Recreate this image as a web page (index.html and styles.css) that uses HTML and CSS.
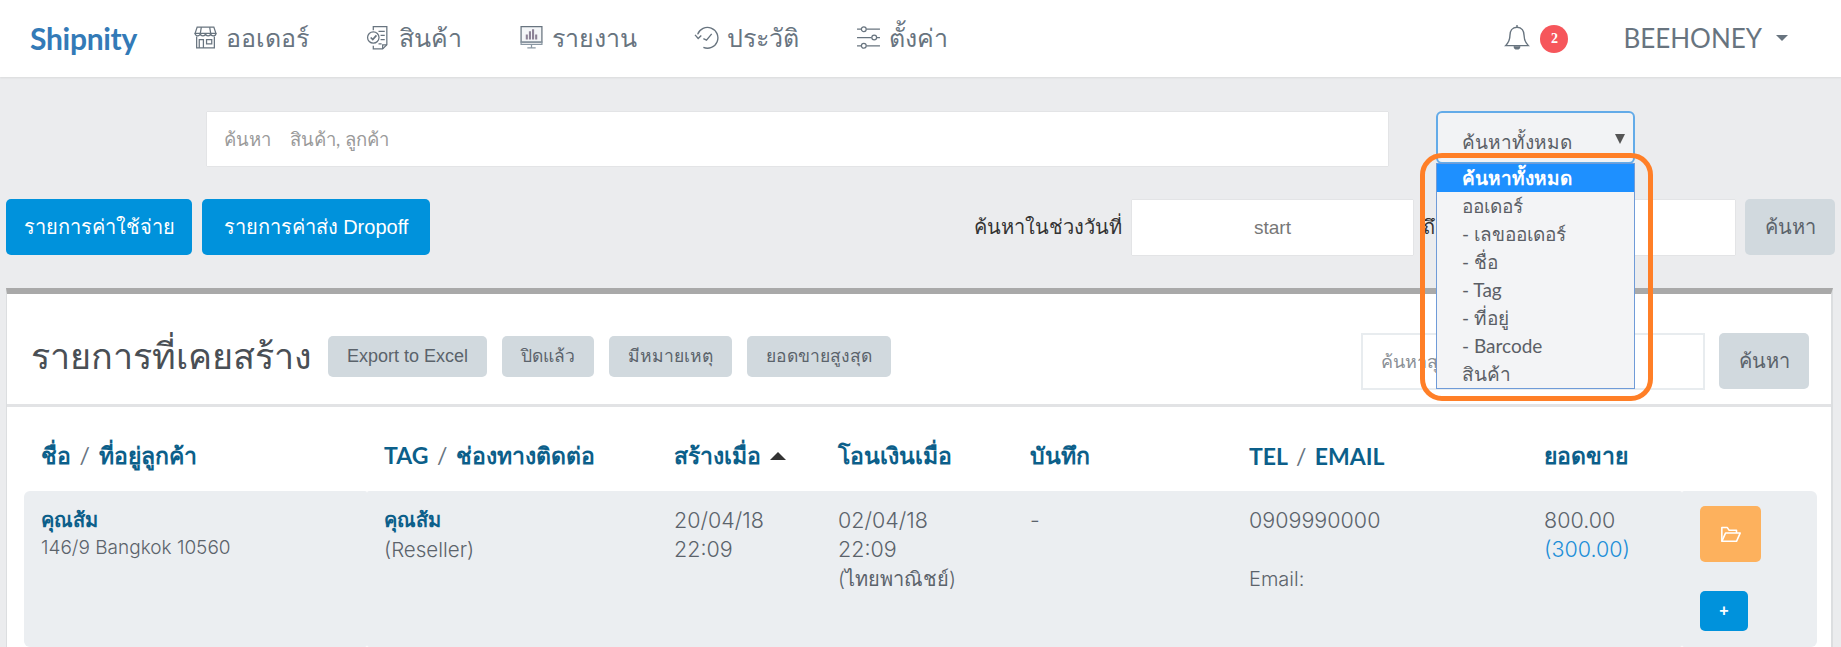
FILE: index.html
```html
<!DOCTYPE html>
<html lang="th">
<head>
    <meta charset="UTF-8">
    <meta name="viewport" content="width=device-width, initial-scale=1.0">
    <title>Shipnity - รายการที่เคยสร้าง</title>
    <link rel="stylesheet" href="styles.css">
</head>
<body>
    <!-- เมนูด้านบน -->
    <header class="navbar">
        <a class="brand">Shipnity</a>
        <nav class="nav-menu">
            <a class="nav-item nav-order">
                <svg class="nav-icon" viewBox="0 0 24 24" fill="none" stroke="#68747f" stroke-width="1.2"><path d="M4 2h16l2 6H2z"/><path d="M2 8a2.5 2.5 0 0 0 5 0a2.500 2.500 0 0 0 5 0a2.500 2.500 0 0 0 5 0a2.500 2.500 0 0 0 5 0"/><path d="M3.500 11v11h17V11M6 22v-8h4v8M13 14h5v4h-5z"/><path d="M8 2 7 8M16 2l1 6"/></svg>
                ออเดอร์
            </a>
            <a class="nav-item nav-product">
                <svg class="nav-icon" viewBox="0 0 24 24" fill="none" stroke="#68747f" stroke-width="1.2"><path d="M7 5V1.500h13V19l-4 4H7v-3"/><path d="M16 23v-4h4M12 6h6M14 10h4M14 14h4M12 18h3"/><circle cx="7" cy="12" r="5.500"/><path d="m4.500 12 2 2 3.500-4" stroke-width="1.600"/></svg>
                สินค้า
            </a>
            <a class="nav-item nav-report">
                <svg class="nav-icon" viewBox="0 0 24 24" fill="none" stroke="#68747f" stroke-width="1.200"><path d="M2 1.500h20v15H2z" fill="#f4f6f8"/><path d="M2 16.500h20v2H2zM12 18.500v3M8 22h8" stroke="#8a97a3"/><path d="M7.500 14V9M10.500 14V6M13.500 14V4M16.500 14V9" stroke="#8c8296" stroke-width="2"/></svg>
                รายงาน
            </a>
            <a class="nav-item nav-history">
                <svg class="nav-icon" viewBox="0 0 24 24" fill="none" stroke="#68747f" stroke-width="1.300"><path d="M3.500 9A10 10 0 1 1 9 21.500"/><path d="M1 9.500 4 13l3-3"/><path d="m9 13 3 1.500 5-6"/></svg>
                ประวัติ
            </a>
            <a class="nav-item nav-setting">
                <svg class="nav-icon" viewBox="0 0 24 24" fill="none" stroke="#68747f" stroke-width="1.200"><path d="M1 4h4M10 4h13M1 12h14M20 12h3M1 20h4M10 20h13"/><circle cx="7.500" cy="4" r="2.300"/><circle cx="17.500" cy="12" r="2.300"/><circle cx="7.500" cy="20" r="2.300"/></svg>
                ตั้งค่า
            </a>
        </nav>
        <div class="nav-right">
            <svg class="bell" viewBox="0 0 24 26" fill="none" stroke="#68747f" stroke-width="1.300"><path d="M12 3.500c-4.500 0-6.500 3.500-6.500 7.500 0 5-2 7.500-4 9.500h21c-2-2-4-4.500-4-9.500 0-4-2-7.500-6.500-7.500z"/><path d="M12 3.500V1.500"/><path d="M9.500 21a2.500 2.500 0 0 0 5 0" fill="#68747f"/></svg>
            <span class="badge">2</span>
            <a class="user-menu">BEEHONEY</a>
            <span class="caret"></span>
        </div>
    </header>

    <!-- แถบค้นหา -->
    <section class="search-row">
        <div class="search-box">ค้นหา &nbsp;&nbsp; สินค้า, ลูกค้า</div>
        <div class="select-wrap">
            <div class="select-box">
                <span>ค้นหาทั้งหมด</span>
                <span class="select-arrow"></span>
            </div>
            <ul class="select-list">
                <li class="active">ค้นหาทั้งหมด</li>
                <li>ออเดอร์</li>
                <li>- เลขออเดอร์</li>
                <li>- ชื่อ</li>
                <li>- Tag</li>
                <li>- ที่อยู่</li>
                <li>- Barcode</li>
                <li>สินค้า</li>
            </ul>
            <div class="highlight-ring"></div>
        </div>
    </section>

    <section class="action-row">
        <div class="action-left">
            <button class="btn-blue btn-expense">รายการค่าใช้จ่าย</button>
            <button class="btn-blue btn-dropoff">รายการค่าส่ง Dropoff</button>
        </div>
        <div class="date-filter">
            <label>ค้นหาในช่วงวันที่</label>
            <div class="date-input date-start">start</div>
            <label>ถึง</label>
            <div class="date-input date-end"></div>
            <button class="btn-gray btn-search">ค้นหา</button>
        </div>
    </section>

    <!-- รายการ -->
    <main class="panel">
        <div class="panel-head">
            <h1>รายการที่เคยสร้าง</h1>
            <button class="btn-gray btn-small btn-export">Export to Excel</button>
            <button class="btn-gray btn-small">ปิดแล้ว</button>
            <button class="btn-gray btn-small">มีหมายเหตุ</button>
            <button class="btn-gray btn-small">ยอดขายสูงสุด</button>
            <div class="panel-search">
                <div class="panel-input">ค้นหาสุด</div>
                <button class="btn-gray btn-search">ค้นหา</button>
            </div>
        </div>

        <div class="table-grid table-head">
            <div>ชื่อ <span class="slash">/</span> ที่อยู่ลูกค้า</div>
            <div>TAG <span class="slash">/</span> ช่องทางติดต่อ</div>
            <div>สร้างเมื่อ <span class="sort-up"></span></div>
            <div>โอนเงินเมื่อ</div>
            <div>บันทึก</div>
            <div>TEL <span class="slash">/</span> EMAIL</div>
            <div>ยอดขาย</div>
            <div></div>
        </div>

        <div class="table-grid table-row">
            <div>
                <div class="cust-name">คุณส้ม</div>
                <div class="cust-addr">146/9 Bangkok 10560</div>
            </div>
            <div>
                <div class="cust-name">คุณส้ม</div>
                <div class="reseller">(Reseller)</div>
            </div>
            <div>20/04/18<br>22:09</div>
            <div>02/04/18<br>22:09<br><span class="bank">(ไทยพาณิชย์)</span></div>
            <div>-</div>
            <div>0909990000<div class="email">Email:</div></div>
            <div>800.00<br><span class="paid">(300.00)</span></div>
            <div class="row-actions">
                <button class="btn-orange">
                    <svg viewBox="0 0 24 24" width="22" height="22" fill="none" stroke="#fff" stroke-width="1.700" stroke-linejoin="round"><path d="M2 20V5h6l2 3h8v3"/><path d="M2 20h16l4-9H6z"/></svg>
                </button>
                <button class="btn-plus">+</button>
            </div>
        </div>
    </main>
</body>
</html>
```

FILE: styles.css
```css
html, body {
    margin: 0;
    padding: 0;
}

body {
    font-family: 'Lato', 'Noto Sans', sans-serif;
    background-color: #ebecee;
    color: #58606a;
    font-size: 18px;
    height: 647px;
    overflow: hidden;
}

button {
    font-family: 'Liberation Sans', sans-serif;
    border: none;
    border-radius: 5px;
    cursor: pointer;
}

/* เมนูด้านบน */
.navbar {
    box-sizing: border-box;
    height: 77px;
    background-color: #fff;
    box-shadow: 0 1px 2px rgba(0, 0, 0, 0.08);
    display: flex;
    align-items: center;
    padding: 0 53px 2px 30px;
}

.brand {
    font-size: 30px;
    font-weight: 700;
    letter-spacing: -0.3px;
    color: #337ab7;
    width: 163px;
}

.nav-menu {
    display: flex;
    align-items: center;
    gap: 57px;
}

.nav-item {
    display: flex;
    align-items: center;
    gap: 8px;
    font-size: 25px;
    color: #68747f;
}

.nav-icon {
    width: 25px;
    height: 25px;
}

.nav-right {
    margin-left: auto;
    display: flex;
    align-items: center;
}

.bell {
    width: 26px;
    height: 29px;
}

.badge {
    width: 28px;
    height: 28px;
    border-radius: 50%;
    background-color: #f6565b;
    color: #fff;
    font-size: 14px;
    font-weight: 700;
    font-family: 'Liberation Serif', serif;
    display: flex;
    align-items: center;
    justify-content: center;
    margin: 2px 0 0 10px;
}

.user-menu {
    font-size: 26px;
    color: #68747f;
    margin-left: 55px;
}

.caret {
    width: 0;
    height: 0;
    border-left: 6px solid transparent;
    border-right: 6px solid transparent;
    border-top: 6px solid #68747f;
    margin-left: 14px;
}

/* แถบค้นหา */
.search-row {
    display: flex;
    align-items: flex-start;
    padding: 35px 0 0 207px;
}

.search-box {
    width: 1164px;
    height: 54px;
    line-height: 54px;
    padding-left: 17px;
    background-color: #fff;
    box-shadow: 0 0 1px rgba(0, 0, 0, 0.2);
    font-size: 18.5px;
    color: #9a9a9a;
}

.select-wrap {
    position: relative;
    margin: -1px 0 0 48px;
    width: 199px;
}

.select-box {
    box-sizing: border-box;
    height: 53px;
    border: 2px solid #63abe8;
    border-radius: 6px;
    background-color: #f2f3f5;
    display: flex;
    align-items: center;
    justify-content: space-between;
    padding: 8px 8px 0 24px;
    font-size: 19px;
    color: #5b5f66;
}

.select-arrow {
    width: 0;
    height: 0;
    border-left: 5px solid transparent;
    border-right: 5px solid transparent;
    border-top: 10px solid #555;
    margin-bottom: 5px;
}

.select-list {
    position: absolute;
    top: 52px;
    left: 0;
    right: 0;
    box-sizing: border-box;
    list-style: none;
    margin: 0;
    padding: 0;
    background-color: #f3f4f6;
    border: 1px solid #6f9bd8;
    z-index: 5;
    font-size: 19px;
    color: #5b5f66;
}

.select-list li {
    height: 28px;
    line-height: 28px;
    padding-left: 25px;
}

.select-list li.active {
    background-color: #1e90ff;
    color: #fff;
    font-weight: 700;
}

.highlight-ring {
    position: absolute;
    top: 42px;
    left: -16px;
    width: 223px;
    height: 238px;
    border: 5px solid #ff7f27;
    border-radius: 22px;
    z-index: 6;
}

/* ปุ่ม */
.action-row {
    display: flex;
    justify-content: space-between;
    align-items: center;
    padding: 33px 6px 0 6px;
}

.action-left {
    display: flex;
    gap: 10px;
}

.btn-blue {
    height: 56px;
    padding: 0;
    background-color: #0092dc;
    color: #fff;
    font-size: 20px;
}

.btn-expense {
    width: 186px;
}

.btn-dropoff {
    width: 228px;
}

.date-filter {
    display: flex;
    align-items: center;
    gap: 10px;
    font-size: 20px;
    color: #333;
}

.date-input {
    height: 55px;
    line-height: 55px;
    background-color: #fff;
    box-shadow: 0 0 1px rgba(0, 0, 0, 0.2);
    text-align: center;
    font-family: 'Liberation Sans', sans-serif;
    font-size: 19px;
    color: #777;
}

.date-start {
    width: 281px;
}

.date-end {
    width: 280px;
}

.btn-gray {
    background-color: #d1d9de;
    color: #5b636b;
}

.btn-search {
    width: 90px;
    height: 56px;
    font-size: 20px;
}

/* รายการ */
.panel {
    margin: 33px 8px 0 6px;
    background-color: #fff;
    border-top: 6px solid #a9a9a9;
    border-right: 2px solid #dcdee0;
    border-left: 1px solid #dcdee0;
}

.panel-head {
    box-sizing: border-box;
    height: 113px;
    border-bottom: 3px solid #e2e3e5;
    display: flex;
    align-items: center;
    gap: 15px;
    padding: 14px 0 0 24px;
}

.panel-head h1 {
    margin: 0 1px 0 0;
    font-size: 36px;
    font-weight: 400;
    color: #4a4f55;
}

.btn-small {
    height: 41px;
    padding: 0 19px;
    font-size: 17.5px;
}

.btn-export {
    font-size: 18px;
}

.panel-search {
    margin: 10px 22px 0 auto;
    display: flex;
    align-items: center;
    gap: 14px;
}

.panel-input {
    box-sizing: border-box;
    width: 344px;
    height: 57px;
    line-height: 53px;
    border: 2px solid #e8ecef;
    padding-left: 18px;
    font-size: 18px;
    color: #8a8f95;
}

.table-grid {
    display: grid;
    grid-template-columns: 343px 290px 164px 192px 219px 295px 155px 1fr;
    margin: 0 14px 0 17px;
}

.table-grid > div {
    padding-left: 17px;
    box-sizing: border-box;
}

.table-head {
    box-sizing: border-box;
    height: 84px;
    padding-top: 13px;
    align-items: center;
    font-size: 23px;
    font-weight: 700;
    word-spacing: 3px;
    color: #0c5f8a;
}

.slash {
    color: #68747f;
    font-weight: 400;
}

.sort-up {
    display: inline-block;
    width: 0;
    height: 0;
    border-left: 8px solid transparent;
    border-right: 8px solid transparent;
    border-bottom: 8px solid #333;
    margin: 0 0 4px 0;
}

/* แต่ละช่องมีมุมโค้งของตัวเอง */
.table-row {
    height: 156px;
    font-family: 'Inter', 'Lato', sans-serif;
    font-weight: 300;
    font-size: 21.5px;
    line-height: 29px;
    color: #5b636b;
}

.table-row > div {
    padding-top: 15px;
    background-color: #ebeef1;
}

.table-row > div:first-child {
    border-radius: 6px 2px 2px 6px;
}

.table-row > div:last-child {
    border-radius: 2px 6px 6px 2px;
}

.table-row > div:nth-child(2) {
    border-radius: 2px 0 0 2px;
}

.table-row > div:nth-child(7) {
    border-radius: 0 2px 2px 0;
}

.cust-name {
    font-size: 20px;
    font-weight: 700;
    color: #0c5f8a;
}

.cust-addr {
    font-size: 19px;
    line-height: 25px;
}

.reseller {
    font-size: 20.500px;
}

.bank {
    font-size: 20px;
}

.email {
    margin-top: 30px;
    font-size: 20px;
}

.paid {
    color: #1d8ed8;
}

.table-row > .row-actions {
    display: flex;
    flex-direction: column;
    align-items: flex-start;
    gap: 29px;
    padding-left: 18px;
}

.btn-orange {
    width: 61px;
    height: 56px;
    background-color: #fdb15d;
    display: flex;
    align-items: center;
    justify-content: center;
}

.btn-plus {
    width: 48px;
    height: 40px;
    background-color: #0092dc;
    color: #fff;
    font-size: 16px;
    font-weight: 700;
}
```
